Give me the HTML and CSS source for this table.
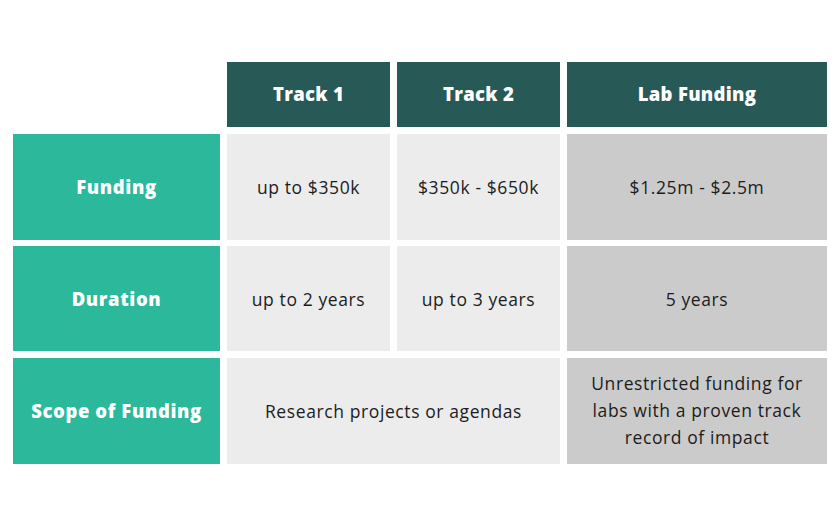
FILE: index.html
```html
<!DOCTYPE html>
<html>
<head>
<meta charset="utf-8">
<link rel="stylesheet" href="styles.css">
</head>
<body>
<div class="table">
  <div class="blank"></div>
  <div class="head">Track 1</div>
  <div class="head">Track 2</div>
  <div class="head">Lab Funding</div>

  <div class="label">Funding</div>
  <div class="cell">up to $350k</div>
  <div class="cell">$350k - $650k</div>
  <div class="cell dark">$1.25m - $2.5m</div>

  <div class="label">Duration</div>
  <div class="cell">up to 2 years</div>
  <div class="cell">up to 3 years</div>
  <div class="cell dark">5 years</div>

  <div class="label">Scope of Funding</div>
  <div class="cell span2">Research projects or agendas</div>
  <div class="cell dark multi">Unrestricted funding for labs with a proven track record of impact</div>
</div>
</body>
</html>
```
FILE: styles.css
```css
html, body {
  margin: 0;
  padding: 0;
  background: #ffffff;
}
body {
  font-family: "Open Sans", Lato, sans-serif;
  width: 840px;
  height: 526px;
  overflow: hidden;
}
.table {
  display: grid;
  grid-template-columns: 207px 163px 163px 260px;
  grid-template-rows: 65px 106px 105px 106px;
  column-gap: 7px;
  row-gap: 6.5px;
  padding: 62px 0 0 13px;
}
.head, .label, .cell {
  display: flex;
  align-items: center;
  justify-content: center;
  text-align: center;
}
.head {
  background: #275a57;
  color: #ffffff;
  font-weight: 800;
  font-size: 18.5px;
  letter-spacing: 0.3px;
  padding-bottom: 2px;
}
.label {
  background: #2bb89b;
  color: #ffffff;
  font-weight: 800;
  font-size: 18.5px;
  letter-spacing: 0.6px;
}
.cell {
  background: #ececec;
  color: #1c1c1c;
  font-size: 17.5px;
  letter-spacing: 0.6px;
}
.cell.dark {
  background: #cbcbcb;
}
.span2 {
  grid-column: span 2;
}
.multi {
  line-height: 27px;
  padding: 0 16px;
}
```
